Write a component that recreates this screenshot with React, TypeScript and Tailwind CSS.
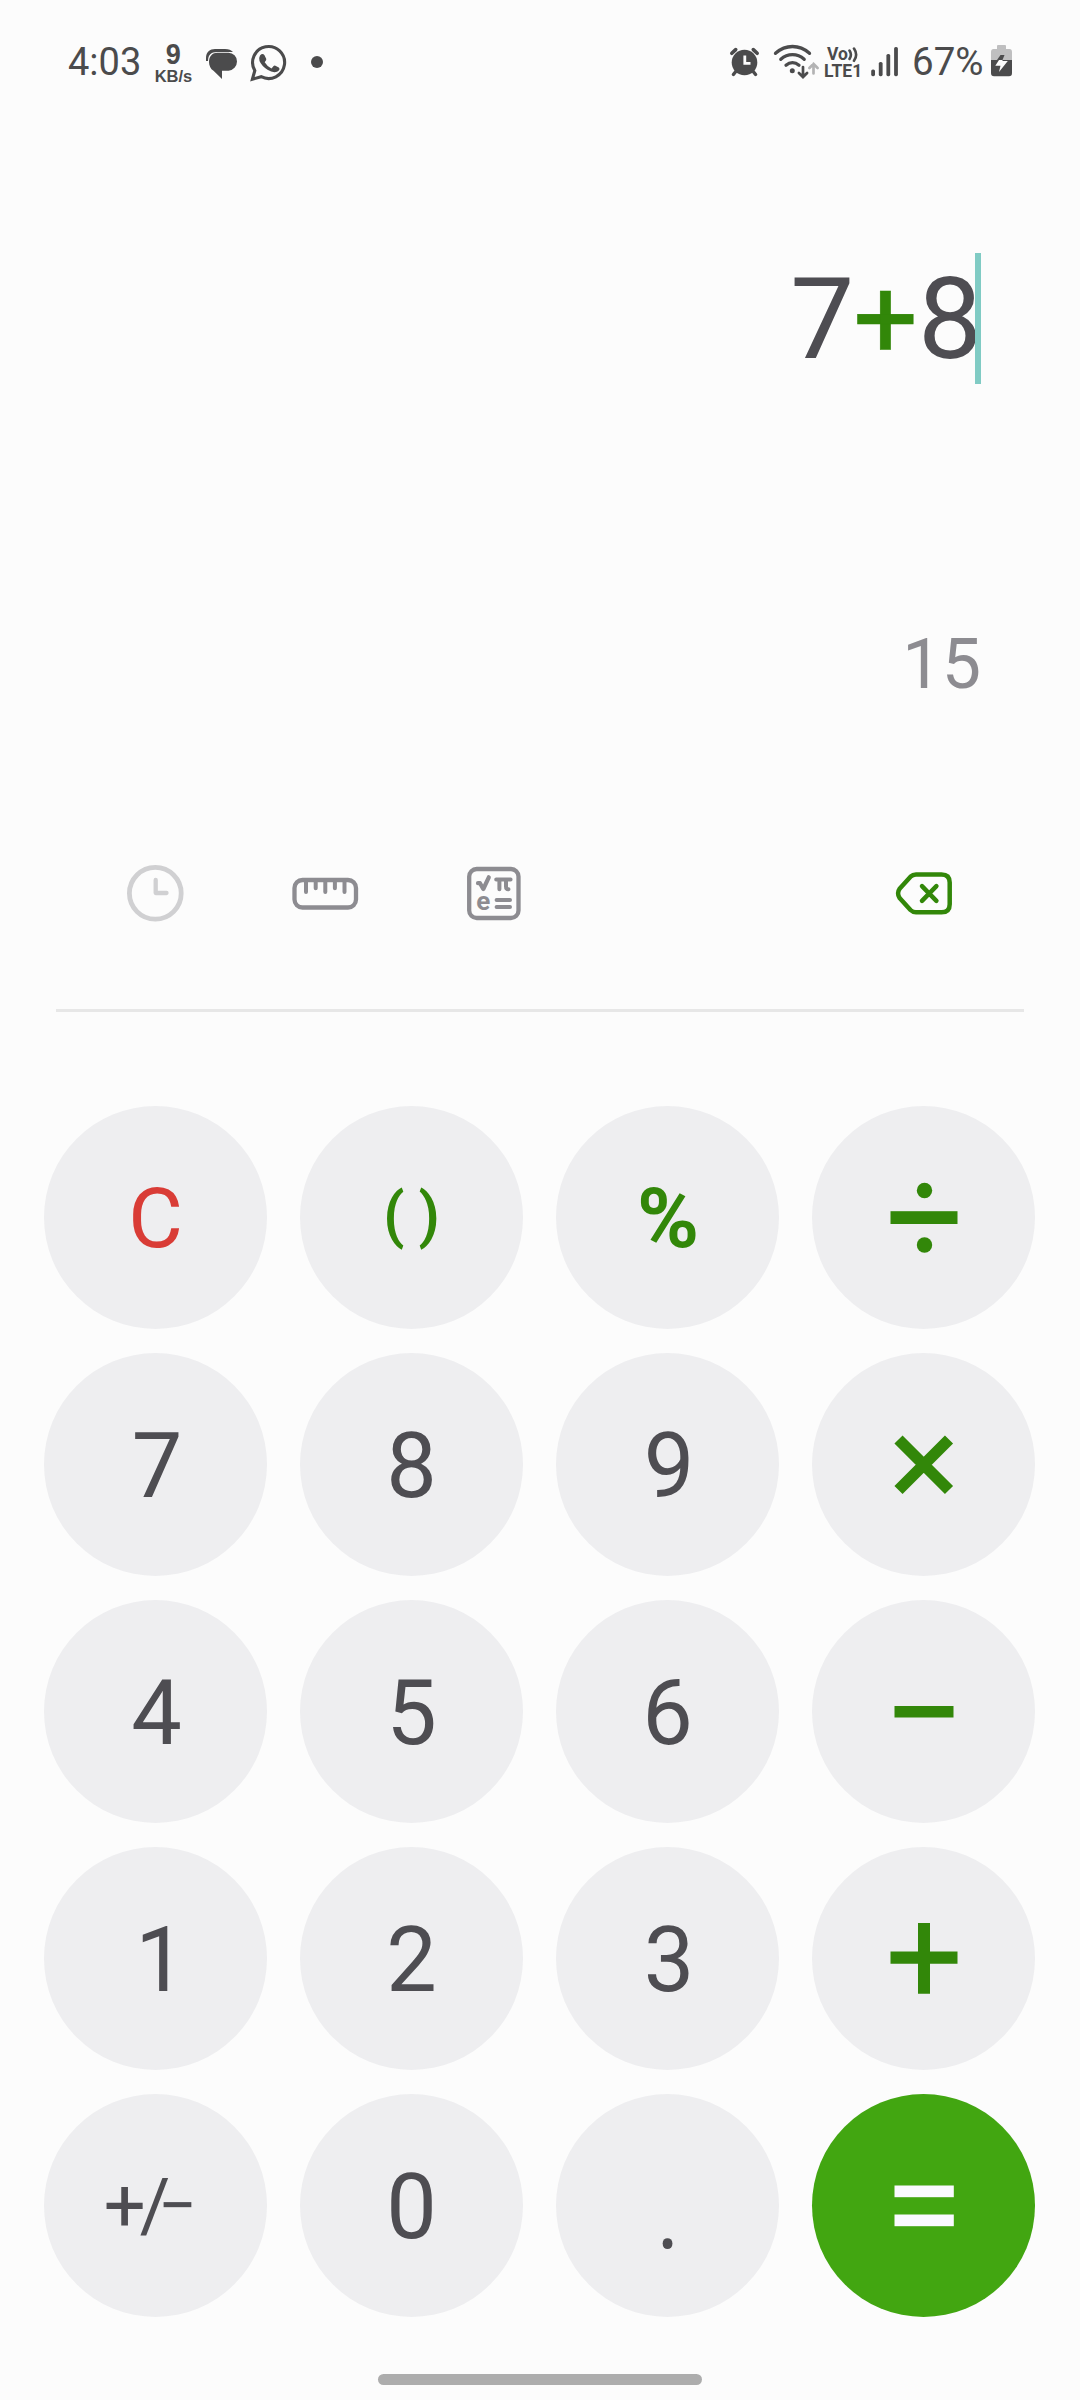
import type { ReactNode } from "react";

const GREEN = "#328709";

function StatusBar() {
  return (
    <header className="flex h-[124px] items-start pl-[68px] pr-[68px] text-[#4b4b4c]">
      <span className="mt-[40px] w-[74px] whitespace-nowrap text-[38px] leading-[44px]">4:03</span>
      <div className="ml-[12px] mt-[40px] flex w-[39px] flex-col items-center font-['Liberation_Sans',sans-serif] font-bold">
        <span className="scale-x-90 text-[30px] leading-[28px]">9</span>
        <span className="whitespace-nowrap text-[16.500px] leading-[17px]">KB/s</span>
      </div>
      <svg className="ml-[11px] mt-[46px]" width="36" height="36" viewBox="204 46 36 36" fill="none">
        <path d="M206 61V58C206 52 210 49 215 49H225C229 49 231 50 233 52H217C211 52 208 55 208 61Z" fill="#4b4b4c" />
        <path d="M217.5 52.7H228.5A8.7 8.7 0 0 1 237 61.5A9.3 9.3 0 0 1 228.5 70.7H222V79L213.5 70.8C210.5 69 209 65.500 209 62C209 56 212.500 52.700 217.500 52.700Z" fill="#4b4b4c" />
      </svg>
      <svg className="ml-[9px] mt-[44px]" width="38" height="38" viewBox="249 44 38 38" fill="none">
        <path d="M252.4 79.2L254.8 70.6A16 16 0 1 1 261.200 76.700Z" stroke="#4b4b4c" strokeWidth="3.1" strokeLinejoin="miter" />
        <path d="M260 55.500Q262.500 52.900 264.500 55.200L266.300 59Q266.600 60 264.700 62.300Q267.300 66.700 271.500 68.400L273.600 66Q274.400 65.200 275.400 65.800L278.800 67.400Q280.700 69.400 277.500 71.500Q273.500 73.600 267.500 69.800Q261.500 65.800 259.500 61Q258.700 57.500 260 55.500Z" fill="#4b4b4c" />
      </svg>
      <span className="ml-[24px] mt-[56px] size-[12px] rounded-full bg-[#4b4b4c]" />

      <svg className="ml-auto mt-[44px]" width="34" height="36" viewBox="728 44 34 36" fill="none">
        <circle cx="744.500" cy="62.500" r="12.800" fill="#4b4b4c" />
        <path d="M731.800 53.300L735.700 49.600M757.200 53.300L753.300 49.600" stroke="#4b4b4c" strokeWidth="3.600" strokeLinecap="round" />
        <path d="M735.800 71.500L733.400 74.500M753.200 71.500L755.600 74.500" stroke="#4b4b4c" strokeWidth="3.400" strokeLinecap="round" />
        <path d="M744.800 55.500V63.300H750.500" stroke="#fcfcfc" strokeWidth="2.800" />
      </svg>
      <svg className="ml-[10px] mt-[42px]" width="48" height="40" viewBox="772 42 48 40" fill="none">
        <g stroke="#4b4b4c" strokeWidth="3.300" strokeLinecap="round">
          <path d="M775.500 53.300Q783.200 46.500 792.500 46.500T809.500 53.300" />
          <path d="M780.800 59.300Q786 54.700 792.500 54.700T804.200 59.300" />
          <path d="M786 65.200Q789 62.700 792.500 62.700T799 65.200" />
          <path d="M803 67V76M798.900 73L803 77L807.100 73" strokeWidth="2.700" />
        </g>
        <circle cx="792.300" cy="70.700" r="2.500" fill="#4b4b4c" />
        <path d="M813.500 73.500V64M809.400 68L813.500 64L817.600 68" stroke="#b3b3b4" strokeWidth="2.700" strokeLinecap="round" />
      </svg>
      <div className="ml-[4px] mt-[46px] flex w-[38px] flex-col font-bold">
        <div className="flex h-[17px] items-center pl-[3px]">
          <span className="text-[17.500px] leading-[17px]">Vo</span>
          <svg width="11" height="17" viewBox="0 0 11 17" fill="none" stroke="#4b4b4c" strokeWidth="2.600" strokeLinecap="round">
            <path d="M1.500 4.500Q4.300 8.700 1.500 13M6 2.500Q10.300 8.700 6 14.800" />
          </svg>
        </div>
        <span className="whitespace-nowrap text-[17.500px] leading-[17px]">LTE1</span>
      </div>
      <svg className="ml-[8px] mt-[46px]" width="30" height="32" viewBox="870 46 30 32" fill="#4b4b4c">
        <rect x="871.200" y="69.500" width="3.800" height="6.700" rx="1.600" />
        <rect x="878.800" y="62" width="3.800" height="14.200" rx="1.600" />
        <rect x="886.400" y="54" width="3.800" height="22.200" rx="1.600" />
        <rect x="894.100" y="47" width="3.800" height="29.200" rx="1.600" />
      </svg>
      <span className="ml-[12px] mt-[40px] w-[73px] whitespace-nowrap text-[38.500px] leading-[44px]">67%</span>
      <svg className="ml-[6px] mt-[44px]" width="21" height="34" viewBox="991 44 21 34" fill="none">
        <path d="M998 45H1005Q1006 45 1006 46V49H1009.500Q1012 49 1012 52V60H991V52Q991 49 993.500 49H997V46Q997 45 998 45Z" fill="#bfbfc0" />
        <path d="M991 60H1012V73Q1012 76.300 1009 76.300H994Q991 76.300 991 73Z" fill="#4b4b4c" />
        <path d="M1000.500 55L1004.500 55L1002.500 60H997Z" fill="#4b4b4c" />
        <path d="M999 60H1002.500V61H1007.800L999 72L1000.500 65.800H995.300Z" fill="#fcfcfc" />
      </svg>
    </header>
  );
}

function Display() {
  return (
    <section className="flex h-[724px] flex-col items-end pr-[99px]">
      <div className="mt-[129px] flex h-[131px] items-start text-[#4e4d52]">
        <div className="mt-px flex text-[114px] leading-[131px]">
          <span>7</span>
          <span className="-ml-px text-[#328709] [-webkit-text-stroke:0.6px_#328709]">+</span>
          <span>8</span>
        </div>
        <span className="-ml-[7px] h-[131px] w-[6px] bg-[#80cbc4]" />
      </div>
      <div className="mt-[240px] text-[70px] leading-[80px] text-[#8d8c91]">15</div>
    </section>
  );
}

function Toolbar() {
  return (
    <div className="mx-[56px] flex h-[164px] items-start border-b-3 border-[#e7e7e7] pl-[67px] pr-[68px]">
      <svg className="mt-[13px]" width="64" height="64" viewBox="123 861 64 64" fill="none" stroke="#d0d0d2">
        <circle cx="155.300" cy="893.300" r="25.900" strokeWidth="4.800" />
        <path d="M155.700 880V893H166.500" strokeWidth="4.300" strokeLinecap="round" strokeLinejoin="round" />
      </svg>
      <svg className="ml-[103px] mt-[13px]" width="70" height="64" viewBox="290 861 70 64" fill="none" stroke="#8d8c91" strokeWidth="4.300">
        <rect x="294.500" y="880" width="61.500" height="27.500" rx="8" />
        <path d="M306 881V892M315.700 881V888.300M325.300 881V892M334.900 881V888.300M344.500 881V892" strokeWidth="4" strokeLinecap="round" />
      </svg>
      <svg className="ml-[102px] mt-[13px]" width="64" height="64" viewBox="462 861 64 64" fill="none" stroke="#8d8c91" strokeLinecap="round" strokeLinejoin="round">
        <rect x="469.200" y="869" width="49.300" height="49" rx="7.500" strokeWidth="4.300" />
        <path d="M478 883.200H480L483.300 889L488.800 877.300" strokeWidth="4.200" />
        <path d="M496.200 879.500H510.600M499.400 880V889.300M506 880V886.500Q506 889.500 508.500 889.200" strokeWidth="4" />
        <path d="M496.600 900H510M496.600 907H510" strokeWidth="4" />
        <text x="476.300" y="909.700" fontSize="26" fontWeight="700" fill="#8d8c91" stroke="none">e</text>
      </svg>
      <svg className="ml-auto mt-[13px]" width="64" height="64" viewBox="892 861 64 64" fill="none" stroke={GREEN} strokeWidth="4.500" strokeLinecap="round" strokeLinejoin="round">
        <path d="M916 874.400H941.500Q949.700 874.400 949.700 882.500V904.200Q949.700 912.300 941.500 912.300H916Q912.800 912.300 910.500 910L899.600 898Q896.500 893.300 899.600 888.800L910.500 876.700Q912.800 874.400 916 874.400Z" />
        <path d="M922 886.200L936.400 900.800M936.400 886.200L922 900.800" />
      </svg>
    </div>
  );
}

function Key({ label, primary, children }: { label: string; primary?: boolean; children: ReactNode }) {
  return (
    <button
      aria-label={label}
      className={
        "flex size-[223px] items-center justify-center rounded-full text-[90px] leading-none text-[#4e4d52] " +
        (primary ? "bg-[#42a611]" : "bg-[#eeeef0]")
      }
    >
      {children}
    </button>
  );
}

function Glyph({ children, fill = GREEN }: { children: ReactNode; fill?: string }) {
  return (
    <svg width="81" height="81" viewBox="-40.500 -40.500 81 81" fill={fill}>
      {children}
    </svg>
  );
}

function Digit({ value, nudge = "" }: { value: string; nudge?: string }) {
  return (
    <Key label={value}>
      <span className={"mt-[4px] " + nudge}>{value}</span>
    </Key>
  );
}

function Keypad() {
  return (
    <main className="mt-[94px] grid grid-cols-[repeat(4,223px)] gap-x-[33px] gap-y-[24px] pl-[44px]">
      <Key label="Clear">
        <span className="mt-[2px] text-[84px] text-[#d93c36]">C</span>
      </Key>
      <Key label="Parentheses">
        <span className="-mt-[4px] flex gap-[14px] text-[61px] font-semibold text-[#328709]">
          <span>(</span>
          <span>)</span>
        </span>
      </Key>
      <Key label="Percent">
        <span className="ml-px mt-[2px] text-[84px] font-bold text-[#328709]">%</span>
      </Key>
      <Key label="Divide">
        <Glyph>
          <circle cx="1" cy="-27" r="7.700" />
          <rect x="-33" y="-6.300" width="67" height="12.800" />
          <circle cx="1" cy="27.500" r="7.700" />
        </Glyph>
      </Key>
      <Digit value="7" nudge="ml-[3px]" />
      <Digit value="8" />
      <Digit value="9" nudge="ml-[3px]" />
      <Key label="Multiply">
        <Glyph>
          <path d="M-25 -25L25.500 25.500M25.500 -25L-25 25.500" stroke={GREEN} strokeWidth="11.500" />
        </Glyph>
      </Key>
      <Digit value="4" nudge="ml-[2px]" />
      <Digit value="5" />
      <Digit value="6" />
      <Key label="Subtract">
        <Glyph>
          <rect x="-29" y="-5.500" width="59" height="11.500" />
        </Glyph>
      </Key>
      <Digit value="1" nudge="ml-[10px]" />
      <Digit value="2" />
      <Digit value="3" nudge="ml-[3px]" />
      <Key label="Add">
        <Glyph>
          <path d="M-5.500 -35.500H6.500V-7H34V5.200H6.500V35.200H-5.500V5.200H-33V-7H-5.500Z" />
        </Glyph>
      </Key>
      <Key label="Plus or minus">
        <span className="-ml-[10px] flex items-center text-[74px]">
          <span>+</span>
          <span className="-ml-[6px]">/</span>
          <span className="-ml-[12px] text-[68px]">−</span>
        </span>
      </Key>
      <Digit value="0" />
      <Key label="Decimal point">
        <span className="mt-[21px] font-['Open_Sans'] text-[84px]">.</span>
      </Key>
      <Key label="Equals" primary>
        <Glyph fill="#fafaff">
          <rect x="-29" y="-20" width="59.300" height="11.700" />
          <rect x="-29" y="9" width="59.300" height="11.700" />
        </Glyph>
      </Key>
    </main>
  );
}

export default function App() {
  return (
    <div className="flex h-[2400px] w-[1080px] flex-col overflow-hidden bg-[#fcfcfc] font-[Roboto,sans-serif]">
      <StatusBar />
      <Display />
      <Toolbar />
      <Keypad />
      <div className="mx-auto mt-[57px] h-[11px] w-[324px] rounded-full bg-[#adadad]" />
    </div>
  );
}
